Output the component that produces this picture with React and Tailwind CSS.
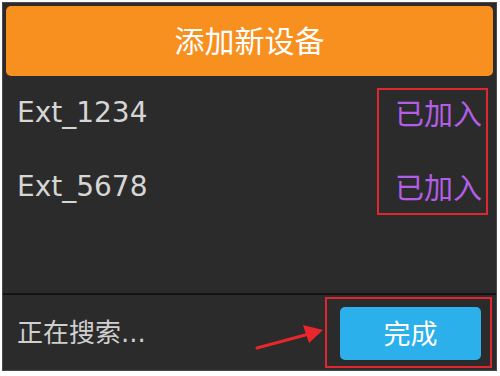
import React from 'react';

const devices = ['Ext_1234', 'Ext_5678'];

const font = { fontFamily: '"Noto Sans", "Noto Sans CJK SC", sans-serif' };
const latin = { fontFamily: '"DejaVu Sans", "Noto Sans CJK SC", sans-serif' };

export default function App() {
    return (
        <div className="w-[500px] h-[376px] bg-white pt-[2px] pl-[2px] pr-[3px] pb-[5px]" style={font}>
            <div className="relative h-full bg-[#2b2b2b] border border-[#4a4a4a] flex flex-col">
                {/* Header */}
                <div className="mx-[3px] mt-[3px] h-[70px] rounded-[5px] bg-[#f7901f] flex items-center justify-center text-white text-[30px] leading-none">
                    添加新设备
                </div>

                {/* Device list */}
                <div className="flex-1 flex flex-col">
                    {devices.map((name) => (
                        <div key={name} className="h-[74px] flex items-center justify-between pl-[14px] pr-[14px]">
                            <span className="text-[28px] text-[#d6d6d6] leading-none" style={latin}>{name}</span>
                            <span className="text-[29px] text-[#b35ee6] leading-none">已加入</span>
                        </div>
                    ))}
                </div>

                {/* Footer */}
                <div className="h-[77px] border-t-2 border-[#141414] flex items-center justify-between pl-[14px] pr-[15px]">
                    <span className="text-[26px] text-[#cfcfcf] leading-none" style={latin}>正在搜索...</span>
                    <button className="w-[141px] h-[53px] mt-[2px] rounded-[5px] bg-[#2bb0ec] text-white text-[27px] leading-none">
                        完成
                    </button>
                </div>

                {/* Annotations */}
                <div className="absolute left-[374px] top-[85px] w-[111px] h-[127px] border-2 border-[#e0262e]"></div>
                <div className="absolute left-[322px] top-[294px] w-[167px] h-[71px] border-2 border-[#e0262e]"></div>
                <svg className="absolute left-[250px] top-[318px]" width="72" height="32" viewBox="0 0 72 32">
                    <line x1="4" y1="27" x2="56" y2="13" stroke="#e8262c" strokeWidth="3" strokeLinecap="round" />
                    <polygon points="70,9 50,4 56,22" fill="#e8262c" />
                </svg>
            </div>
        </div>
    );
}
